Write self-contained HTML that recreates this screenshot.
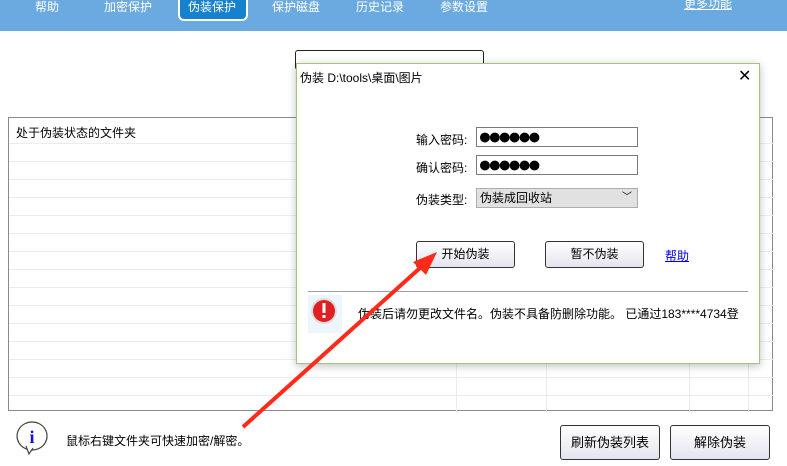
<!DOCTYPE html>
<html><head><meta charset="utf-8"><style>
*{margin:0;padding:0;box-sizing:border-box}
body{width:787px;height:466px;position:relative;background:#fff;font-family:"Liberation Sans","Noto Sans CJK SC",sans-serif;font-size:12px;color:#000;overflow:hidden}
.top{position:absolute;left:0;top:0;width:787px;height:31px;background:#6aaae0}
.tab{position:absolute;top:0;color:#fff;font-size:12px;line-height:14px;white-space:nowrap}
.sel{position:absolute;left:178px;top:-4px;width:70px;height:25px;background:#1581cf;border:2px solid #fff;border-top:none;border-radius:0 0 6px 6px}
.abs{position:absolute}
.grid{position:absolute;left:8px;top:117px;width:765px;height:294px;border:1px solid #8a8a8a}
.btn{position:absolute;border:1px solid #333;border-radius:3px;background:linear-gradient(#fff,#e4e4ee);text-align:center;font-size:13px}
.dlg{position:absolute;left:296px;top:63px;width:464px;height:301px;background:#fff;border:1px solid #a7c27a;box-shadow:0 2px 8px rgba(0,0,0,.25)}
.inp{position:absolute;left:179px;width:162px;height:20px;border:1px solid #7a7a7a;font-size:23px;line-height:17px;padding-left:1px;letter-spacing:-4px;white-space:nowrap;overflow:hidden}
.lbl{position:absolute;left:119px;font-size:12px}
</style></head><body>
<div class="top"></div>
<div class="tab" style="left:35px">帮助</div>
<div class="tab" style="left:104px">加密保护</div>
<div class="sel"></div>
<div class="tab" style="left:188px">伪装保护</div>
<div class="tab" style="left:272px">保护磁盘</div>
<div class="tab" style="left:356px">历史记录</div>
<div class="tab" style="left:440px">参数设置</div>
<div class="abs" style="left:684px;top:-5px;color:#fff;font-size:12px;text-decoration:underline">更多功能</div>

<div class="abs" style="left:295px;top:50px;width:189px;height:20px;border:1px solid #222;border-radius:3px"></div>

<div class="grid">
<div class="abs" style="left:7px;top:6px;font-size:12px">处于伪装状态的文件夹</div>
<svg class="abs" style="left:0;top:0" width="765" height="294">
<g stroke="#ececec" stroke-width="1">
<line x1="0" y1="25.5" x2="765" y2="25.5"/><line x1="0" y1="43.5" x2="765" y2="43.5"/><line x1="0" y1="61.5" x2="765" y2="61.5"/><line x1="0" y1="79.5" x2="765" y2="79.5"/><line x1="0" y1="97.5" x2="765" y2="97.5"/><line x1="0" y1="115.5" x2="765" y2="115.5"/><line x1="0" y1="133.5" x2="765" y2="133.5"/><line x1="0" y1="151.5" x2="765" y2="151.5"/><line x1="0" y1="169.5" x2="765" y2="169.5"/><line x1="0" y1="187.5" x2="765" y2="187.5"/><line x1="0" y1="205.5" x2="765" y2="205.5"/><line x1="0" y1="223.5" x2="765" y2="223.5"/><line x1="0" y1="241.5" x2="765" y2="241.5"/><line x1="0" y1="259.5" x2="765" y2="259.5"/><line x1="0" y1="277.5" x2="765" y2="277.5"/>
<line x1="447.5" y1="0" x2="447.5" y2="294"/><line x1="537.5" y1="0" x2="537.5" y2="294"/><line x1="680.5" y1="0" x2="680.5" y2="294"/><line x1="739.5" y1="0" x2="739.5" y2="294"/>
</g></svg>
</div>

<svg class="abs" style="left:15px;top:420px" width="36" height="36">
<path d="M17 2a15 14 0 1 0 0.1 0z" fill="#fff" stroke="#444" stroke-width="1.2"/>
<path d="M11 26 L14 34 L18 28" fill="#fff" stroke="#444" stroke-width="1.2"/>
<text x="17" y="23" font-size="18" font-weight="bold" fill="#1010e0" text-anchor="middle" font-family="Liberation Serif">i</text>
</svg>
<div class="abs" style="left:66px;top:432px">鼠标右键文件夹可快速加密/解密。</div>
<div class="btn" style="left:560px;top:425px;width:100px;height:35px;line-height:33px">刷新伪装列表</div>
<div class="btn" style="left:670px;top:425px;width:100px;height:35px;line-height:33px">解除伪装</div>

<div class="dlg">
<div class="abs" style="left:3px;top:5px;font-size:12px">伪装 D:\tools\桌面\图片</div>
<div class="abs" style="left:441px;top:2px;font-size:16px">✕</div>
<div class="lbl" style="top:67px">输入密码:</div>
<div class="inp" style="top:63px">●●●●●●</div>
<div class="lbl" style="top:95px">确认密码:</div>
<div class="inp" style="top:91px">●●●●●●</div>
<div class="lbl" style="top:127px">伪装类型:</div>
<div class="inp" style="top:124px;background:#e1e1e1;border-color:#adadad;font-size:12px;letter-spacing:0;line-height:18px;padding-left:3px">伪装成回收站<span style="position:absolute;right:5px;top:0;font-size:10px">﹀</span></div>
<div class="btn" style="left:119px;top:177px;width:99px;height:27px;line-height:25px;font-size:12px">开始伪装</div>
<div class="btn" style="left:248px;top:177px;width:99px;height:27px;line-height:25px;font-size:12px">暂不伪装</div>
<div class="abs" style="left:368px;top:183px;color:#0000ee;text-decoration:underline">帮助</div>
<div class="abs" style="left:11px;top:227px;width:440px;height:1px;background:#a0a0a0"></div>
<div class="abs" style="left:11px;top:231px;width:34px;height:38px;background:#eef6fd"></div>
<svg class="abs" style="left:11px;top:232px" width="34" height="34"><circle cx="16" cy="15" r="13" fill="#ddd"/><circle cx="16" cy="15" r="11" fill="#e02020"/><rect x="14.5" y="7" width="3" height="10" fill="#fff"/><rect x="14.5" y="19" width="3" height="3" fill="#fff"/></svg>
<div class="abs" style="left:61px;top:241px;white-space:nowrap">伪装后请勿更改文件名。伪装不具备防删除功能。 已通过183****4734登</div>
</div>

<svg class="abs" style="left:0;top:0" width="787" height="466"><line x1="243" y1="427" x2="420" y2="268" stroke="#ff2a1a" stroke-width="4"/><polygon points="437,252 413,262 426,275" fill="#ff2a1a"/></svg>
</body></html>
